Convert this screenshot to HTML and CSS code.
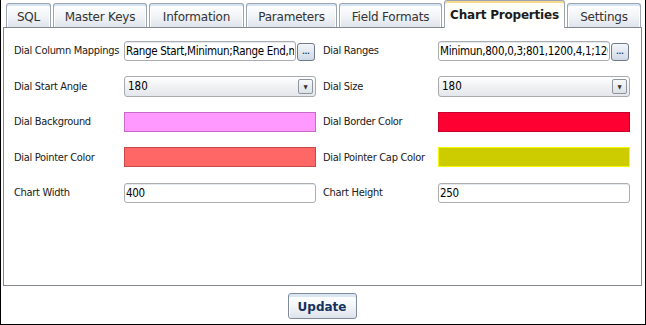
FILE: index.html
```html
<!DOCTYPE html>
<html lang="en">

<head>
	<meta charset="UTF-8" />
	<title>Chart Properties</title>
	<link rel="stylesheet" href="styles.css">
</head>

<body>
	<div class="window">
		<div class="tab-strip">
			<div class="tab tab-sql">SQL</div>
			<div class="tab tab-keys">Master Keys</div>
			<div class="tab tab-info">Information</div>
			<div class="tab tab-params">Parameters</div>
			<div class="tab tab-fields">Field Formats</div>
			<div class="tab tab-chart active">Chart Properties</div>
			<div class="tab tab-settings">Settings</div>
		</div>
		<div class="panel">
			<div class="form-grid">
				<label class="field-label">Dial Column Mappings</label>
				<div class="picker">
					<input type="text" class="text-field" value="Range Start,Minimun;Range End,maximum" />
					<button class="dots-button">...</button>
				</div>
				<label class="field-label right">Dial Ranges</label>
				<div class="picker">
					<input type="text" class="text-field" value="Minimun,800,0,3;801,1200,4,1;1201,1500" />
					<button class="dots-button">...</button>
				</div>

				<label class="field-label">Dial Start Angle</label>
				<div class="select-box"><span>180</span><span class="select-arrow">&#9660;</span></div>
				<label class="field-label right">Dial Size</label>
				<div class="select-box"><span>180</span><span class="select-arrow">&#9660;</span></div>

				<label class="field-label">Dial Background</label>
				<div class="swatch swatch-bg"></div>
				<label class="field-label right">Dial Border Color</label>
				<div class="swatch swatch-border"></div>

				<label class="field-label">Dial Pointer Color</label>
				<div class="swatch swatch-pointer"></div>
				<label class="field-label right">Dial Pointer Cap Color</label>
				<div class="swatch swatch-cap"></div>

				<label class="field-label">Chart Width</label>
				<input type="text" class="text-field wide" value="400" />
				<label class="field-label right">Chart Height</label>
				<input type="text" class="text-field wide" value="250" />
			</div>
		</div>
		<div class="footer">
			<button class="update-button">Update</button>
		</div>
	</div>
</body>

</html>
```

FILE: styles.css
```css
* {
	box-sizing: border-box;
}

body {
	margin: 0;
	font-family: "DejaVu Sans Condensed", "DejaVu Sans", sans-serif;
	font-size: 11px;
	color: #1e1e1e;
	background: #ffffff;
}

.window {
	width: 646px;
	height: 325px;
	border: 1px solid #000000;
	border-top: none;
	display: flex;
	flex-direction: column;
}

.tab-strip {
	height: 27px;
	display: flex;
	align-items: flex-end;
	gap: 2px;
	padding-left: 5px;
}

.tab {
	height: 24px;
	border: 1px solid #9aa4b3;
	border-bottom: none;
	border-radius: 3px 3px 0 0;
	background: linear-gradient(#ffffff, #f3f5f8 50%, #dfe4ec);
	box-shadow: inset 0 2px 0 #d6e4f4, inset 1px 0 0 #ffffff, inset -1px 0 0 #ffffff;
	display: flex;
	align-items: center;
	justify-content: center;
	padding-top: 2px;
	font-family: "DejaVu Sans", Verdana, sans-serif;
	font-size: 12px;
	color: #333333;
	letter-spacing: -0.2px;
}

.tab-sql { width: 45px; }
.tab-keys { width: 94px; }
.tab-info { width: 95px; }
.tab-params { width: 91px; }
.tab-fields { width: 103px; }
.tab-chart { width: 121px; }
.tab-settings { width: 74px; }

.tab.active {
	height: 28px;
	margin-bottom: -1px;
	position: relative;
	background: linear-gradient(#fffdf4, #ffffff);
	box-shadow: inset 0 2px 0 #f6d98c;
	font-weight: bold;
	color: #1c1c1c;
	padding-top: 0;
}

.panel {
	height: 259px;
	margin: 0 3px 0 2px;
	border: 1px solid #828790;
	padding: 5px 10px 0 10px;
}

.form-grid {
	display: grid;
	grid-template-columns: 110px 192px 122px 192px;
	grid-auto-rows: 35.5px;
	align-items: center;
}

.field-label {
	white-space: nowrap;
	color: #202020;
	letter-spacing: -0.3px;
}

.field-label.right {
	padding-left: 7px;
}

.picker {
	display: flex;
	align-items: center;
	gap: 1px;
}

.text-field {
	width: 172px;
	height: 20px;
	border: 1px solid #abadb3;
	border-radius: 3px;
	padding: 0 1px;
	font-family: "DejaVu Sans Condensed", "DejaVu Sans", sans-serif;
	font-size: 11.5px;
	letter-spacing: -0.3px;
	color: #000000;
	background: #ffffff;
	box-shadow: inset 0 1px 0 #e3e9ef;
}

.text-field.wide {
	width: 192px;
}

.dots-button {
	width: 18px;
	height: 18px;
	margin-top: 2px;
	padding: 0 0 4px 0;
	border: 1px solid #707a8a;
	border-radius: 3px;
	background: linear-gradient(#f4f7fb, #cfd9e6);
	font-size: 9px;
	font-weight: bold;
	color: #1d3a66;
	line-height: 1;
	display: flex;
	align-items: flex-end;
	justify-content: center;
}

.select-box {
	height: 21px;
	border: 1px solid #a7abb0;
	border-radius: 3px;
	background: linear-gradient(#ffffff, #f0f1f3 50%, #e4e7eb);
	display: flex;
	align-items: center;
	justify-content: space-between;
	padding: 0 2px 0 3px;
	font-size: 11.5px;
	color: #000000;
}

.select-arrow {
	width: 15px;
	height: 15px;
	border: 1px solid #8e959e;
	border-radius: 2px;
	background: linear-gradient(#f8f9fa, #dde1e6);
	font-size: 6px;
	color: #333333;
	display: flex;
	align-items: center;
	justify-content: center;
}

.swatch {
	height: 20px;
	border: 1px solid;
}

.swatch-bg {
	background: #ff99ff;
	border-color: #c76bc8;
}

.swatch-border {
	background: #ff0033;
	border-color: #c4002c;
}

.swatch-pointer {
	background: #ff6666;
	border-color: #c44a4a;
}

.swatch-cap {
	background: #cccc00;
	border-color: #f8f800;
}

.footer {
	display: flex;
	justify-content: center;
	padding-top: 7px;
	padding-right: 2px;
}

.update-button {
	width: 69px;
	height: 26px;
	border: 1px solid #7f8b9c;
	border-radius: 3px;
	background: linear-gradient(#ffffff, #f4f6f9 50%, #dde3eb);
	box-shadow: inset 0 3px 0 #dbe6f3, inset 1px 0 0 #ffffff;
	font-family: "DejaVu Sans", Verdana, sans-serif;
	font-size: 12px;
	font-weight: bold;
	color: #15325f;
	padding-top: 3px;
}
```
